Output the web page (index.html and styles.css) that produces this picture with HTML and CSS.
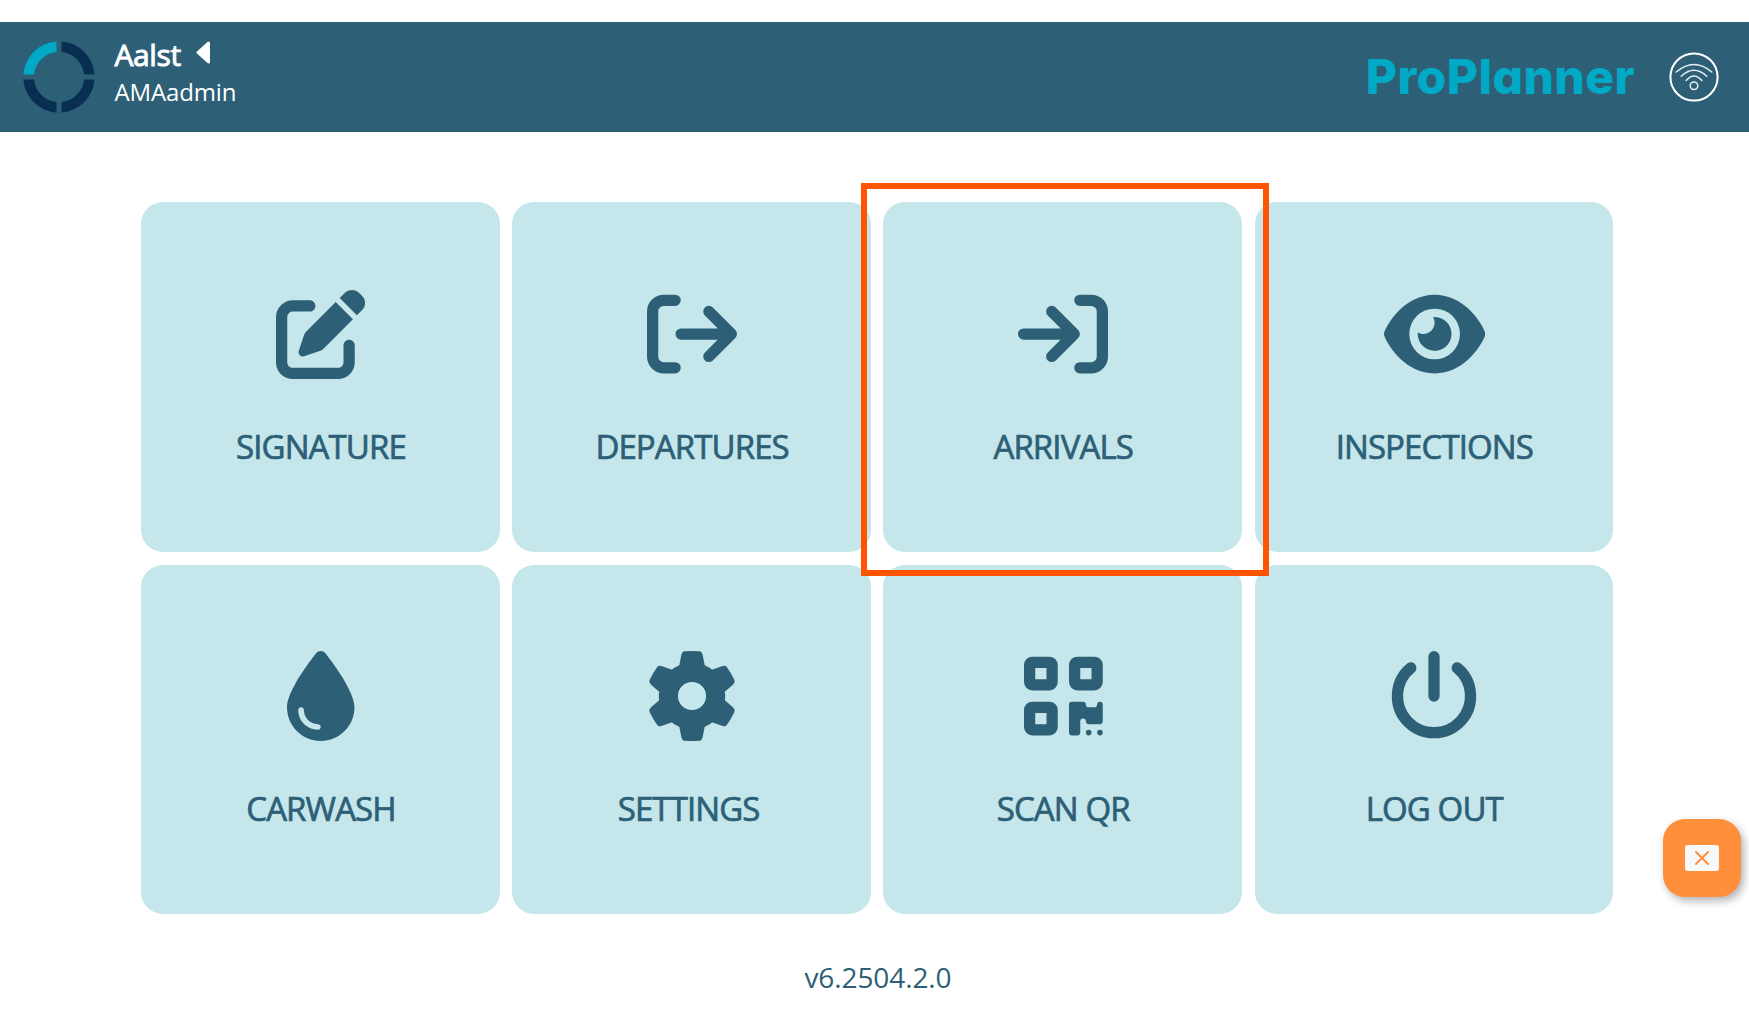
FILE: index.html
```html
<!DOCTYPE html>
<html lang="en">
  <head>
    <meta charset="UTF-8" />
    <meta name="viewport" content="width=device-width, initial-scale=1.0" />
    <title>ProPlanner</title>
    <link rel="stylesheet" href="styles.css">
  </head>
  <body>
    <header class="header">
      <svg class="logo" viewBox="-36 -36 72 72">
        <path class="logo-light" d="M-35.6 -2.5A35.7 35.7 0 0 1 -2.5 -35.6V-25A25 25 0 0 0 -25 -2.5z" />
        <path d="M2.5 -35.6A35.7 35.7 0 0 1 35.6 -2.5H25A25 25 0 0 0 2.5 -25z" />
        <path d="M35.6 2.5A35.7 35.7 0 0 1 2.5 35.6V25A25 25 0 0 0 25 2.5z" />
        <path d="M-2.5 35.6A35.7 35.7 0 0 1 -35.6 2.5H-25A25 25 0 0 0 -2.5 25z" />
      </svg>
      <div class="user">
        <div class="location">
          <span>Aalst</span>
          <svg class="caret" viewBox="0 0 15 23">
            <path d="M2 11.5L12.5 2V21z" />
          </svg>
        </div>
        <div class="username">AMAadmin</div>
      </div>
      <div class="brand">ProPlanner</div>
      <svg class="wifi" viewBox="-25 -25 50 50">
        <circle class="wifi-ring" r="23.6" />
        <path d="M-17.8 -5Q0 -20 17.8 -5M-12.8 -0.8Q0 -12.6 12.8 -0.8M-7.8 3.4Q0 -5.6 7.8 3.4" />
        <circle cx="0" cy="8.7" r="3.8" />
      </svg>
    </header>

    <main class="menu">
      <a class="card">
        <svg class="icon" viewBox="0 0 512 512">
          <path d="M471.6 21.7c-21.9-21.9-57.3-21.9-79.2 0L362.3 51.7l97.9 97.9 30.1-30.1c21.9-21.9 21.9-57.3 0-79.2L471.6 21.7zm-299.2 220c-6.1 6.1-10.8 13.6-13.5 21.9l-29.6 88.8c-2.9 8.6-.6 18.1 5.8 24.6s15.9 8.7 24.6 5.8l88.8-29.6c8.2-2.7 15.7-7.4 21.9-13.5L437.7 172.3 339.7 74.3 172.4 241.7zM96 64C43 64 0 107 0 160V416c0 53 43 96 96 96H352c53 0 96-43 96-96V320c0-17.7-14.3-32-32-32s-32 14.3-32 32v96c0 17.7-14.3 32-32 32H96c-17.7 0-32-14.3-32-32V160c0-17.7 14.3-32 32-32h96c17.7 0 32-14.3 32-32s-14.3-32-32-32H96z" />
        </svg>
        <span class="label">SIGNATURE</span>
      </a>
      <a class="card">
        <svg class="icon line" viewBox="0 0 512 512">
          <path d="M160 64H96a64 64 0 0 0 -64 64V384a64 64 0 0 0 64 64h64M194 256H480M352 128L480 256L352 384" />
        </svg>
        <span class="label">DEPARTURES</span>
      </a>
      <a class="card active">
        <svg class="icon line" viewBox="0 0 512 512">
          <path d="M352 64h64a64 64 0 0 1 64 64V384a64 64 0 0 1 -64 64h-64M32 256H320M192 128L320 256L192 384" />
        </svg>
        <span class="label">ARRIVALS</span>
      </a>
      <a class="card">
        <svg class="icon" viewBox="0 0 576 512">
          <path d="M288 32c-80.8 0-145.5 36.8-192.6 80.6C48.6 156 17.3 208 2.5 243.7c-3.3 7.9-3.3 16.7 0 24.6C17.3 304 48.6 356 95.4 399.4C142.5 443.2 207.2 480 288 480s145.5-36.8 192.6-80.6c46.8-43.5 78.1-95.4 93-131.1c3.3-7.9 3.3-16.7 0-24.6c-14.9-35.7-46.2-87.7-93-131.1C433.5 68.8 368.8 32 288 32zM144 256a144 144 0 1 1 288 0 144 144 0 1 1 -288 0zm144-64c0 35.3-28.7 64-64 64c-11.5 0-22.3-3-31.7-8.4c-1 10.9-.1 22.1 2.9 33.2c13.7 51.2 66.4 81.6 117.6 67.9s81.6-66.4 67.9-117.6c-12.2-45.7-55.5-74.8-101.1-70.8c5.3 9.3 8.4 20.1 8.4 31.7z" />
        </svg>
        <span class="label">INSPECTIONS</span>
      </a>
      <a class="card">
        <svg class="icon" viewBox="0 0 384 512">
          <path d="M192 512C86 512 0 426 0 320C0 228.8 130.2 57.7 166.6 11.7C172.6 4.2 181.5 0 191.1 0h1.8c9.6 0 18.5 4.2 24.5 11.7C253.8 57.7 384 228.8 384 320c0 106-86 192-192 192zM96 336c0-8.8-7.2-16-16-16s-16 7.2-16 16c0 61.9 50.1 112 112 112c8.8 0 16-7.2 16-16s-7.2-16-16-16c-44.2 0-80-35.8-80-80z" />
        </svg>
        <span class="label">CARWASH</span>
      </a>
      <a class="card">
        <svg class="icon" viewBox="-256 -256 512 512">
          <defs>
            <path id="tooth" d="M-72 -176L-60 -236Q-57 -252 -44 -254Q0 -258 44 -254Q57 -252 60 -236L72 -176L50 -100H-50z" />
          </defs>
          <circle class="gear-body" r="134.5" />
          <use href="#tooth" />
          <use href="#tooth" transform="rotate(60)" />
          <use href="#tooth" transform="rotate(120)" />
          <use href="#tooth" transform="rotate(180)" />
          <use href="#tooth" transform="rotate(240)" />
          <use href="#tooth" transform="rotate(300)" />
        </svg>
        <span class="label label-settings">SETTINGS</span>
      </a>
      <a class="card">
        <svg class="icon" viewBox="0 0 448 512">
          <path fill-rule="evenodd" d="M48 32h96a48 48 0 0 1 48 48v96a48 48 0 0 1 -48 48H48a48 48 0 0 1 -48 -48V80a48 48 0 0 1 48 -48zM64 96v64h64V96z" />
          <path fill-rule="evenodd" d="M304 32h96a48 48 0 0 1 48 48v96a48 48 0 0 1 -48 48h-96a48 48 0 0 1 -48 -48V80a48 48 0 0 1 48 -48zM320 96v64h64V96z" />
          <path fill-rule="evenodd" d="M48 288h96a48 48 0 0 1 48 48v96a48 48 0 0 1 -48 48H48a48 48 0 0 1 -48 -48v-96a48 48 0 0 1 48 -48zM64 352v64h64v-64z" />
          <path d="M272 288h64a16 16 0 0 1 16 16a16 16 0 0 0 16 16h32a16 16 0 0 0 16 -16a16 16 0 0 1 32 0v96a16 16 0 0 1 -16 16h-64a16 16 0 0 1 -16 -16a16 16 0 0 0 -32 0v64a16 16 0 0 1 -16 16h-32a16 16 0 0 1 -16 -16V304a16 16 0 0 1 16 -16z" />
          <circle cx="368" cy="464" r="16" />
          <circle cx="432" cy="464" r="16" />
        </svg>
        <span class="label">SCAN QR</span>
      </a>
      <a class="card">
        <svg class="icon line" viewBox="0 0 512 512">
          <path d="M256 32V256M124 96A208 208 0 1 0 388 96" />
        </svg>
        <span class="label">LOG OUT</span>
      </a>
    </main>

    <footer class="version">v6.2504.2.0</footer>

    <button class="float-btn" aria-label="Close">
      <svg viewBox="0 0 34 26">
        <rect width="34" height="26" rx="3" />
        <path d="M11 7L23 19M23 7L11 19" />
      </svg>
    </button>
  </body>
</html>
```
FILE: styles.css
```css
*,
*::after {
  box-sizing: border-box;
}
body {
  margin: 0;
  padding-top: 21.5px;
  height: 1016px;
  overflow: hidden;
  font-family: 'Open Sans', sans-serif;
  background: #fff;
  color: #2d6077;
}
.header {
  display: flex;
  align-items: center;
  height: 110.5px;
  padding: 0 30px 0 23px;
  background: #2d6077;
  color: #fff;
}
.logo {
  width: 72px;
  height: 72px;
  fill: #082f52;
}
.logo-light {
  fill: #00a9c5;
}
.user {
  margin: 0 auto 0 19.5px;
  padding-bottom: 7px;
}
.location {
  display: flex;
  gap: 15px;
  font-size: 30px;
  line-height: 38px;
  letter-spacing: -0.4px;
  -webkit-text-stroke: 0.9px #fff;
}
.caret {
  width: 15px;
  height: 23px;
  margin-top: 5px;
  fill: #fff;
  stroke: #fff;
  stroke-width: 3;
  stroke-linejoin: round;
}
.username {
  font-size: 24px;
  line-height: 36px;
  letter-spacing: -0.15px;
}
.brand {
  margin-right: 34px;
  font-family: Inter, sans-serif;
  font-feature-settings: 'cv11';
  font-size: 48px;
  font-weight: 800;
  line-height: 60px;
  letter-spacing: 0.4px;
  color: #00a9c5;
}
.wifi {
  width: 50px;
  height: 50px;
  fill: none;
  stroke: #e6eef2;
  stroke-width: 1.5;
  stroke-linecap: round;
}
.wifi-ring {
  stroke: #fff;
  stroke-width: 2;
}
.menu {
  display: grid;
  grid-template-columns: repeat(4, 1fr);
  grid-auto-rows: 349.7px;
  gap: 13.1px 12.7px;
  width: 1471.7px;
  margin: 70px 0 0 141.3px;
}
.card {
  position: relative;
  display: flex;
  flex-direction: column;
  align-items: center;
  padding-top: 86.5px;
  border-radius: 22px;
  background: #c5e7eb;
}
/* frame around the highlighted tile */
.active::after {
  content: '';
  position: absolute;
  z-index: 1;
  top: -19px;
  left: -22px;
  width: 408px;
  height: 393px;
  border: 6px solid #ff5500;
}
.icon {
  height: 90px;
  margin-left: 1px;
  fill: #2d6077;
}
.line {
  fill: none;
  stroke: #2d6077;
  stroke-width: 64;
  stroke-linecap: round;
  stroke-linejoin: round;
}
.gear-body {
  fill: none;
  stroke: #2d6077;
  stroke-width: 109;
}
.label {
  margin: 45px 0 0 1px;
  font-size: 33px;
  line-height: 46px;
  letter-spacing: -0.9px;
  -webkit-text-stroke: 0.7px #2d6077;
}
.label-settings {
  margin-left: -6px;
}
.version {
  margin-top: 44px;
  padding-left: 7px;
  text-align: center;
  font-size: 28px;
  line-height: 38px;
  letter-spacing: -0.1px;
}
.float-btn {
  position: absolute;
  top: 819.3px;
  left: 1663.3px;
  width: 77.5px;
  height: 77.5px;
  padding: 0;
  display: flex;
  align-items: center;
  justify-content: center;
  border: none;
  border-radius: 22px;
  background: #ff8f3a;
  box-shadow: 3px 4px 8px rgba(0, 0, 0, 0.3);
}
.float-btn svg {
  width: 34px;
  height: 26px;
  fill: #f8f9fb;
}
.float-btn path {
  stroke: #ff8f3a;
  stroke-width: 2;
  stroke-linecap: round;
}
```
